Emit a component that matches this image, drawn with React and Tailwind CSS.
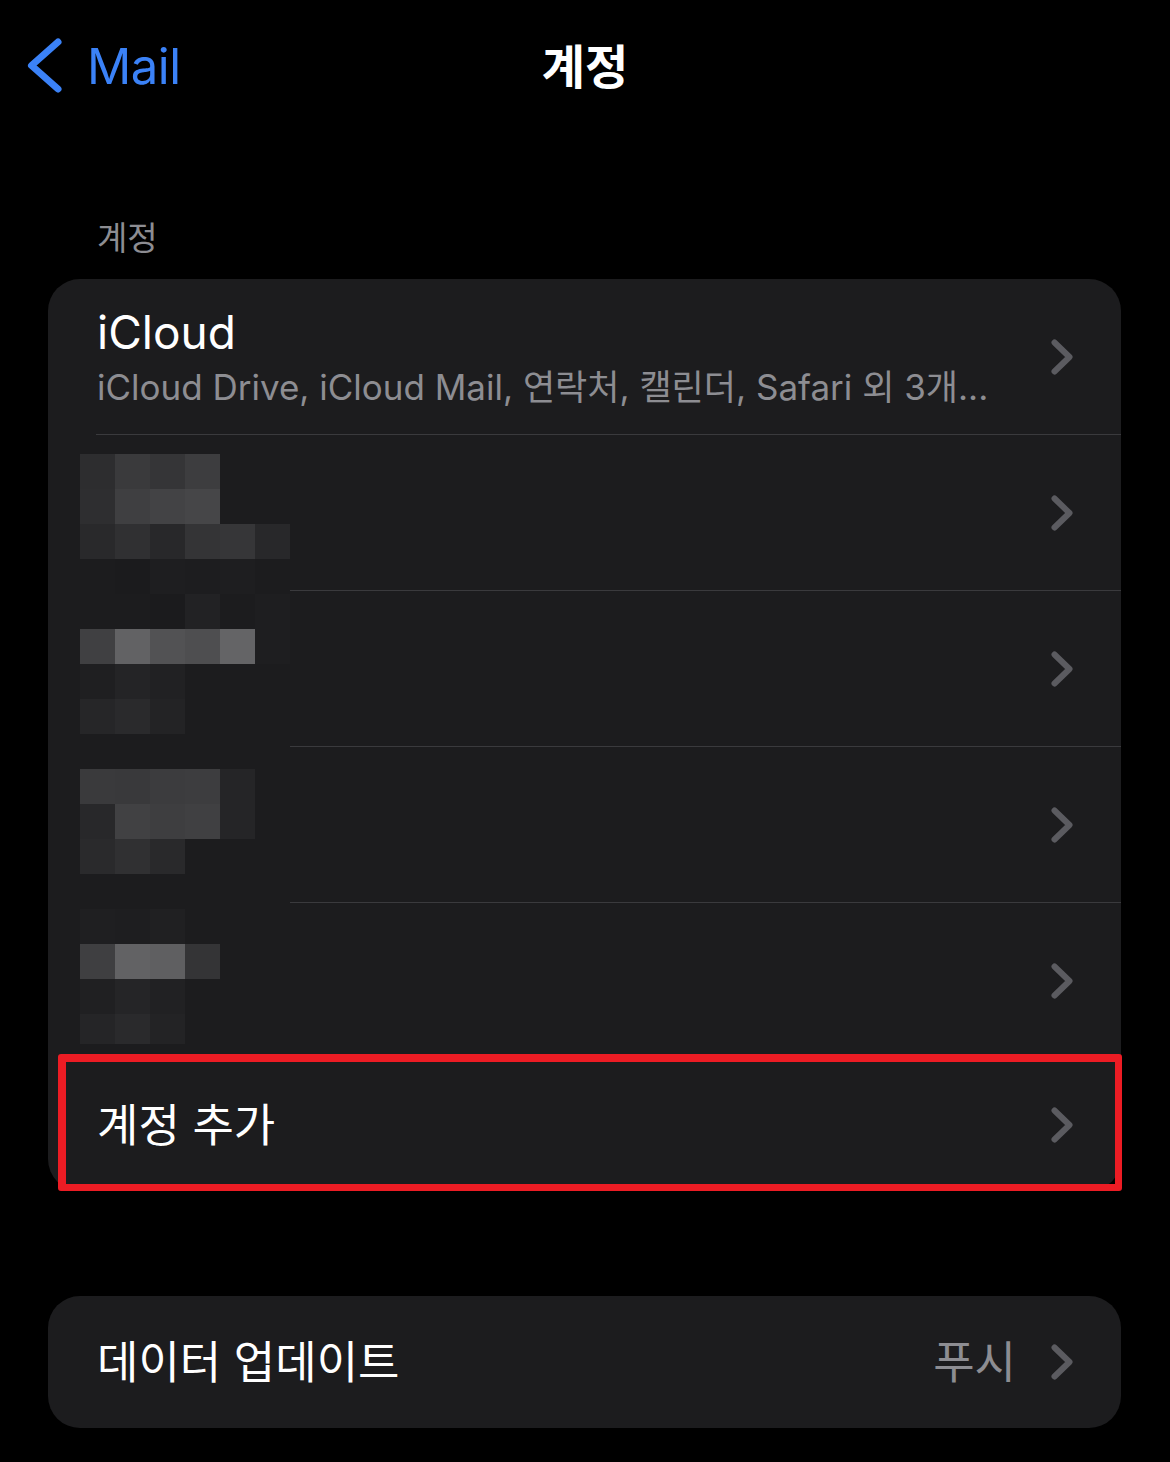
const FONT = "font-['Inter','Noto_Sans_CJK_KR',sans-serif]"

// pixelated censor block laid over the hidden accounts (35px cells)
const MOSAIC = [
  ['bg-[#2d2d2f]', 'bg-[#3a3a3c]', 'bg-[#353537]', 'bg-[#3d3d3f]', 'bg-[#1c1c1e]', 'bg-[#1c1c1e]'],
  ['bg-[#2e2e30]', 'bg-[#3f3f41]', 'bg-[#434345]', 'bg-[#464648]', 'bg-[#1c1c1e]', 'bg-[#1c1c1e]'],
  ['bg-[#29292b]', 'bg-[#303032]', 'bg-[#28282a]', 'bg-[#343436]', 'bg-[#363638]', 'bg-[#28282a]'],
  ['bg-[#1c1c1e]', 'bg-[#1b1b1d]', 'bg-[#1e1e20]', 'bg-[#1d1d1f]', 'bg-[#1e1e20]', 'bg-[#1c1c1e]'],
  ['bg-[#1c1c1e]', 'bg-[#1c1c1e]', 'bg-[#1b1b1d]', 'bg-[#222224]', 'bg-[#1c1c1e]', 'bg-[#1e1e20]'],
  ['bg-[#404042]', 'bg-[#626264]', 'bg-[#525254]', 'bg-[#4e4e50]', 'bg-[#646466]', 'bg-[#1e1e20]'],
  ['bg-[#1f1f21]', 'bg-[#242426]', 'bg-[#212123]', 'bg-[#1c1c1e]', 'bg-[#1c1c1e]', 'bg-[#1c1c1e]'],
  ['bg-[#262628]', 'bg-[#2a2a2c]', 'bg-[#232325]', 'bg-[#1c1c1e]', 'bg-[#1c1c1e]', 'bg-[#1c1c1e]'],
  ['bg-[#1c1c1e]', 'bg-[#1c1c1e]', 'bg-[#1c1c1e]', 'bg-[#1c1c1e]', 'bg-[#1c1c1e]', 'bg-[#1c1c1e]'],
  ['bg-[#3a3a3c]', 'bg-[#39393b]', 'bg-[#3c3c3e]', 'bg-[#3d3d3f]', 'bg-[#252527]', 'bg-[#1c1c1e]'],
  ['bg-[#28282a]', 'bg-[#414143]', 'bg-[#3e3e40]', 'bg-[#404042]', 'bg-[#252527]', 'bg-[#1c1c1e]'],
  ['bg-[#2a2a2c]', 'bg-[#303032]', 'bg-[#29292b]', 'bg-[#1c1c1e]', 'bg-[#1c1c1e]', 'bg-[#1c1c1e]'],
  ['bg-[#1c1c1e]', 'bg-[#1c1c1e]', 'bg-[#1c1c1e]', 'bg-[#1c1c1e]', 'bg-[#1c1c1e]', 'bg-[#1c1c1e]'],
  ['bg-[#1f1f21]', 'bg-[#1e1e20]', 'bg-[#202022]', 'bg-[#1c1c1e]', 'bg-[#1c1c1e]', 'bg-[#1c1c1e]'],
  ['bg-[#3f3f41]', 'bg-[#626264]', 'bg-[#5f5f61]', 'bg-[#343436]', 'bg-[#1c1c1e]', 'bg-[#1c1c1e]'],
  ['bg-[#202022]', 'bg-[#252527]', 'bg-[#212123]', 'bg-[#1c1c1e]', 'bg-[#1c1c1e]', 'bg-[#1c1c1e]'],
  ['bg-[#252527]', 'bg-[#2a2a2c]', 'bg-[#232325]', 'bg-[#1c1c1e]', 'bg-[#1c1c1e]', 'bg-[#1c1c1e]'],
]

function Chevron() {
  return (
    <svg width="24" height="36" viewBox="0 0 24 36" className="shrink-0">
      <path d="M4.5 3.5 L19.5 18 L4.5 32.5" fill="none" stroke="#5b5b60" strokeWidth="6" strokeLinecap="round" strokeLinejoin="round" />
    </svg>
  )
}

function Separator() {
  return <div className="ml-[48px] h-px bg-[#3a3a3d]" />
}

export default function App() {
  return (
    <div className={`w-[1170px] h-[1462px] bg-black overflow-hidden ${FONT}`}>
      {/* nav bar */}
      <div className="grid grid-cols-3 items-center h-[132px]">
        <div className="flex items-center pl-[24px]">
          <svg width="40" height="62" viewBox="0 0 40 62" className="shrink-0">
            <path d="M34 7 L7.5 30.5 L34 54" fill="none" stroke="#3b82f7" strokeWidth="7" strokeLinecap="round" strokeLinejoin="round" />
          </svg>
          <span className="ml-[23px] text-[49px] leading-none text-[#3b82f7] tracking-[-0.5px]">Mail</span>
        </div>
        <h1 className="justify-self-center text-[47px] leading-none font-bold text-white">계정</h1>
        <div />
      </div>

      {/* section label */}
      <div className="mt-[86px] mb-[21px] pl-[97px] h-[40px] leading-[40px] text-[33px] text-[#8d8d92]">계정</div>

      {/* accounts card */}
      <div className="relative ml-[48px] w-[1073px] rounded-[32px] bg-[#1c1c1e]">
        <div className="flex items-center justify-between h-[155px] pl-[49px] pr-[47px]">
          <div className="flex flex-col">
            <span className="text-[46px] leading-[56px] text-white">iCloud</span>
            <span className="mt-[4px] text-[35px] leading-[46px] text-[#8d8d92]">iCloud Drive, iCloud Mail, 연락처, 캘린더, Safari 외 3개...</span>
          </div>
          <Chevron />
        </div>
        <Separator />

        {[0, 1, 2, 3].map((i) => (
          <div key={i}>
            <div className="flex items-center justify-end h-[155px] pr-[47px]">
              <Chevron />
            </div>
            <Separator />
          </div>
        ))}

        <div className="flex items-center justify-between h-[132px] pl-[49px] pr-[47px]">
          <span className="text-[45px] leading-none text-white">계정 추가</span>
          <Chevron />
        </div>

        {/* pixelated overlay */}
        <div className="absolute left-[32px] top-[175px] w-[210px] h-[590px] overflow-hidden flex flex-col">
          {MOSAIC.map((row, r) => (
            <div key={r} className="flex shrink-0 h-[35px]">
              {row.map((c, k) => (
                <div key={k} className={`w-[35px] h-[35px] ${c}`} />
              ))}
            </div>
          ))}
        </div>

        {/* red highlight box */}
        <div className="absolute left-[10px] top-[775px] w-[1064px] h-[137px] border-[8px] border-r-[7px] border-b-[7px] border-[#ec1c24] rounded-[3px]" />
      </div>

      {/* data update card */}
      <div className="mt-[105px] ml-[48px] w-[1073px] h-[132px] rounded-[32px] bg-[#1c1c1e] flex items-center justify-between pl-[49px] pr-[47px]">
        <span className="text-[45px] leading-none text-white">데이터 업데이트</span>
        <div className="flex items-center gap-[34px]">
          <span className="text-[45px] leading-none text-[#8d8d92]">푸시</span>
          <Chevron />
        </div>
      </div>
    </div>
  )
}
